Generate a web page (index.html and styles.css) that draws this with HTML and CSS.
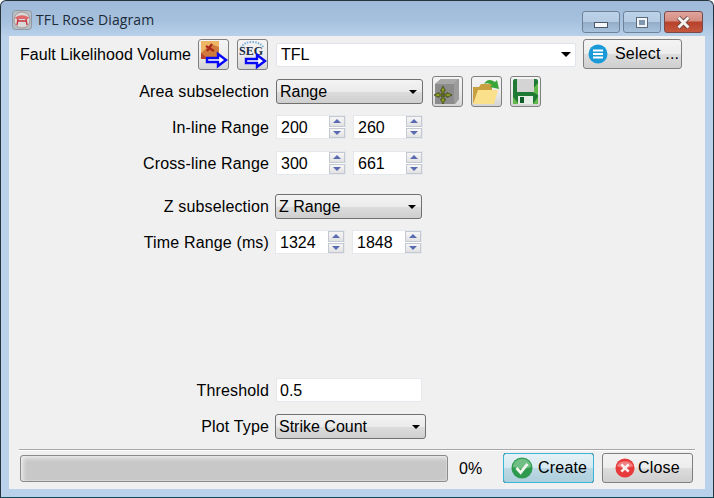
FILE: index.html
```html
<!DOCTYPE html>
<html lang="en">
<head>
  <meta charset="UTF-8" />
  <title>TFL Rose Diagram</title>
  <link rel="stylesheet" href="styles.css">
</head>
<body>
  <div class="window">
    <div class="titlebar">
      <svg class="app-icon" width="20" height="20" viewBox="0 0 20 20">
        <rect x="0.5" y="0.5" width="19" height="19" rx="3" fill="#b5bcc4" stroke="#8d98a3"/>
        <circle cx="10" cy="10" r="8" fill="#d8d8d8" stroke="#a89a9a"/>
        <path d="M3 7.5 Q10 3 17 7.5 L16 9 H4 Z" fill="#e0686c"/>
        <path d="M6 9 L5 15 M14 9 L15 15 M6 11 H14" stroke="#c8323a" stroke-width="1.4" fill="none"/>
      </svg>
      <span class="title">TFL Rose Diagram</span>
      <div class="caption-buttons">
        <div class="caption-btn">
          <span class="glyph-min"></span>
        </div>
        <div class="caption-btn">
          <span class="glyph-max"></span>
        </div>
        <div class="caption-btn close">
          <svg width="15" height="13" viewBox="0 0 15 13">
            <path d="M2.5 1.5 L12.5 11.5 M12.5 1.5 L2.5 11.5" stroke="#5a3a38" stroke-width="4.4"/>
            <path d="M2.5 1.5 L12.5 11.5 M12.5 1.5 L2.5 11.5" stroke="#f4f1ee" stroke-width="3"/>
          </svg>
        </div>
      </div>
    </div>

    <div class="client">
      <div class="row volume-row">
        <span class="volume-label">Fault Likelihood Volume</span>
        <div class="icon-btn">
          <svg width="29" height="29" viewBox="0 0 29 29">
            <rect x="2" y="1" width="18" height="18" fill="#d07a3c"/>
            <path d="M2 1 H20 V7 L12 4 L2 13 Z" fill="#eeb564"/>
            <path d="M2 13 L9 19 H2 Z" fill="#b8422a"/>
            <path d="M7 6 L15 11 M13 4 L8 11" stroke="#a82a1e" stroke-width="2.2"/>
            <path d="M8 18 H19 V14 L27 20 L19 26 V22 H8 Z" fill="#fff" stroke="#0808f4" stroke-width="2.4"/>
          </svg>
        </div>
        <div class="icon-btn">
          <svg width="29" height="29" viewBox="0 0 29 29">
            <path d="M3 8 Q6 2 14 2 Q22 2 26 8" fill="none" stroke="#7fb0d8" stroke-width="2" stroke-dasharray="1.5 1.2"/>
            <text class="seg-text" x="1" y="15">SEG</text>
            <path d="M8 19 H19 V15 L27 21 L19 27 V23 H8 Z" fill="#fff" stroke="#0808f4" stroke-width="2.4"/>
          </svg>
        </div>
        <div class="combo-flat">
          <span>TFL</span>
          <span class="arrow"></span>
        </div>
        <div class="btn select-btn">
          <svg width="20" height="20" viewBox="0 0 20 20">
            <circle cx="10" cy="10" r="9.5" fill="#1a9ad8"/>
            <path d="M5 6.5 H15 M5 10 H15 M5 13.5 H15" stroke="#fff" stroke-width="2"/>
          </svg>
          <span>Select ...</span>
        </div>
      </div>

      <div class="row area-row">
        <span class="label">Area subselection</span>
        <div class="combo area-combo"><span>Range</span><span class="arrow small"></span></div>
        <div class="area-tools">
          <div class="icon-btn">
            <svg width="29" height="29" viewBox="0 0 29 29">
              <path d="M2 7 L8 2 H26 V22 L22 27 H2 Z" fill="#8c8c8c"/>
              <path d="M2 7 L8 2 H26 L21 7 Z" fill="#a8a8a8"/>
              <path d="M21 7 L26 2 V22 L21 27 Z" fill="#9c9c9c"/>
              <path d="M7.5 14 L10 9 L12.5 14 H11 V17 H9 V14 Z M7.5 22 L10 27 L12.5 22 H11 V19 H9 V22 Z M6 15.5 L1 18 L6 20.5 V19 H9 V17 H6 Z M14 15.5 L19 18 L14 20.5 V19 H11 V17 H14 Z" fill="#8c9c24" stroke="#3c4418" stroke-width="0.8"/>
            </svg>
          </div>
          <div class="icon-btn">
            <svg width="29" height="29" viewBox="0 0 29 29">
              <path d="M1 10 H7 L9 7 H20 V26 H1 Z" fill="#c9a040"/>
              <path d="M1 27 L6 13 H26 L22 27 Z" fill="#fbe08c"/>
              <path d="M12 7 Q16 0 23 5 L25 3 L27 12 L18 10 L20 8 Q16 5 12 7 Z" fill="#3aa63a"/>
            </svg>
          </div>
          <div class="icon-btn">
            <svg width="29" height="29" viewBox="0 0 29 29">
              <rect x="2" y="2" width="25" height="25" rx="2" fill="#1f7a36"/>
              <path d="M20 14 L27 6 V18 Z M2 20 L8 27 H2 Z M22 27 L27 20 V27 Z" fill="#62b84a"/>
              <rect x="6" y="2" width="17" height="13" fill="#d4d4d4"/>
              <rect x="7" y="19" width="15" height="8" fill="#e6ece6"/>
              <rect x="9" y="20" width="4" height="6" fill="#0f5c28"/>
            </svg>
          </div>
        </div>
      </div>

      <div class="row range-row inline-row">
        <span class="label">In-line Range</span>
        <div class="range-pair">
          <div class="spin"><span class="spin-value">200</span><span class="spin-arrows"><i class="up"></i><i class="down"></i></span></div>
          <div class="spin"><span class="spin-value">260</span><span class="spin-arrows"><i class="up"></i><i class="down"></i></span></div>
        </div>
      </div>

      <div class="row range-row cross-row">
        <span class="label">Cross-line Range</span>
        <div class="range-pair">
          <div class="spin"><span class="spin-value">300</span><span class="spin-arrows"><i class="up"></i><i class="down"></i></span></div>
          <div class="spin"><span class="spin-value">661</span><span class="spin-arrows"><i class="up"></i><i class="down"></i></span></div>
        </div>
      </div>

      <div class="row z-row">
        <span class="label tight">Z subselection</span>
        <div class="combo area-combo"><span>Z Range</span><span class="arrow small"></span></div>
      </div>

      <div class="row range-row time-row">
        <span class="label tight">Time Range (ms)</span>
        <div class="range-pair">
          <div class="spin"><span class="spin-value">1324</span><span class="spin-arrows"><i class="up"></i><i class="down"></i></span></div>
          <div class="spin"><span class="spin-value">1848</span><span class="spin-arrows"><i class="up"></i><i class="down"></i></span></div>
        </div>
      </div>

      <div class="spacer"></div>

      <div class="row range-row">
        <span class="label">Threshold</span>
        <div class="text-field">0.5</div>
      </div>

      <div class="row plot-row">
        <span class="label tight">Plot Type</span>
        <div class="combo plot-combo"><span>Strike Count</span><span class="arrow small"></span></div>
      </div>

      <div class="separator"></div>

      <div class="bottom-row">
        <div class="progress"></div>
        <span class="percent">0%</span>
        <div class="btn action-btn create">
          <svg width="22" height="22" viewBox="0 0 24 24">
            <circle cx="12" cy="12" r="11.5" fill="#2e9a4e"/>
            <path d="M2 11 A10 9 0 0 1 22 11 Q12 15 2 11 Z" fill="#6fbf84"/>
            <path d="M6 12 L10.5 17 L18 7.5" fill="none" stroke="#f2f6ee" stroke-width="3"/>
          </svg>
          <span>Create</span>
        </div>
        <div class="btn action-btn close-btn">
          <svg width="20" height="20" viewBox="0 0 22 22">
            <circle cx="11" cy="11" r="10.5" fill="#e83a3a"/>
            <path d="M2 9 A9.5 8 0 0 1 20 9 Q11 13 2 9 Z" fill="#f08080"/>
            <path d="M7 7 L15 15 M15 7 L7 15" stroke="#fbeeee" stroke-width="3"/>
          </svg>
          <span>Close</span>
        </div>
      </div>
    </div>
  </div>
</body>
</html>
```

FILE: styles.css
```css
html, body {
  margin: 0;
  padding: 0;
  background: #fff;
}

.window {
  width: 714px;
  height: 498px;
  box-sizing: border-box;
  display: flex;
  flex-direction: column;
  padding: 0 8px 8px 8px;
  border: 1px solid #26343c;
  border-bottom-color: #0f4a58;
  border-radius: 6px 6px 0 0;
  background: linear-gradient(to bottom, #9fbad8 0, #a6c1de 20px, #b9d1ea 36px);
  font-family: "Liberation Sans", Arial, sans-serif;
  font-size: 16px;
  color: #000;
}

.titlebar {
  height: 35px;
  flex: none;
  display: flex;
  align-items: center;
  position: relative;
}

.app-icon {
  margin: 2px 0 0 3px;
}

.title {
  margin: 2px 0 0 4px;
  font-family: "Open Sans", sans-serif;
  font-size: 14px;
  letter-spacing: 0.1px;
  color: #1c2a38;
}

.caption-buttons {
  position: absolute;
  top: 10px;
  right: 2px;
  display: flex;
  gap: 3px;
}

.caption-btn {
  width: 38px;
  height: 22px;
  box-sizing: border-box;
  display: flex;
  align-items: center;
  justify-content: center;
  border: 1px solid #6f8299;
  border-radius: 3px;
  background: linear-gradient(to bottom, #bcd2e8 0, #b4cbe3 50%, #94aec9 52%, #a8c1db 100%);
}

.caption-btn.close {
  width: 39px;
  border-color: #7a4a4a;
  background: linear-gradient(to bottom, #e0a49c 0, #d48c80 45%, #b8402a 50%, #c4583e 100%);
}

.glyph-min {
  width: 12px;
  height: 4px;
  margin-top: 6px;
  background: #f6f8fa;
  border: 1px solid #4a5a6c;
}

.glyph-max {
  width: 6px;
  height: 5px;
  border: 2px solid #f2f5f8;
  outline: 1px solid #5a6a7c;
  background: #7f96ae;
}

.client {
  flex: 1;
  display: flex;
  flex-direction: column;
  padding: 3px 0 6px 11px;
  background: #f0f0f0;
}

.row {
  display: flex;
  align-items: center;
  flex: none;
}

.volume-row {
  height: 31px;
  gap: 8px;
}

.volume-label {
  width: 170px;
  letter-spacing: 0.05px;
  white-space: nowrap;
}

.area-row {
  height: 31px;
  margin-top: 6px;
}

.range-row {
  height: 24px;
  padding-top: 1px;
  box-sizing: border-box;
  align-items: flex-start;
}

.range-row .label {
  line-height: 23px;
}

.inline-row {
  margin-top: 8px;
}

.cross-row {
  margin-top: 12px;
}

.z-row {
  height: 25px;
  margin-top: 19px;
}

.time-row {
  margin-top: 11px;
}

.plot-row {
  height: 25px;
  margin-top: 12px;
}

.spacer {
  flex: 1;
}

.label {
  width: 249px;
  margin-right: 7px;
  text-align: right;
  letter-spacing: 0.15px;
  white-space: nowrap;
}

.label.tight {
  margin-right: 6px;
}

.icon-btn {
  width: 31px;
  height: 31px;
  box-sizing: border-box;
  border: 1px solid #7f7f7f;
  border-radius: 3px;
  background: linear-gradient(to bottom, #f4f4f4, #ececec 50%, #d4d4d4);
  overflow: hidden;
}

.icon-btn svg {
  display: block;
}

.seg-text {
  font-family: "Liberation Serif", serif;
  font-size: 12px;
  font-weight: bold;
  fill: #1a2a40;
}

.combo-flat {
  width: 300px;
  height: 24px;
  box-sizing: border-box;
  display: flex;
  align-items: center;
  justify-content: space-between;
  padding: 0 4px 0 4px;
  border: 1px solid #dfe5ea;
  border-radius: 2px;
  background: #fff;
}

.arrow {
  width: 0;
  height: 0;
  border-left: 5px solid transparent;
  border-right: 5px solid transparent;
  border-top: 5px solid #000;
}

.arrow.small {
  border-left-width: 4px;
  border-right-width: 4px;
  border-top-width: 4px;
}

.combo {
  height: 25px;
  box-sizing: border-box;
  display: flex;
  align-items: center;
  justify-content: space-between;
  padding: 0 5px 0 3px;
  border: 1px solid #707070;
  border-radius: 3px;
  background: linear-gradient(to bottom, #f3f3f3, #ebebeb 50%, #dcdcdc 52%, #cfcfcf);
}

.area-combo {
  width: 147px;
}

.plot-combo {
  width: 151px;
}

.area-tools {
  display: flex;
  gap: 8px;
  margin-left: 9px;
}

.range-pair {
  display: flex;
  gap: 7px;
  margin-top: -1px;
}

.spin {
  width: 70px;
  height: 24px;
  box-sizing: border-box;
  display: flex;
  justify-content: space-between;
  padding-left: 4px;
  line-height: 23px;
  border: 1px solid #e4e8ec;
  background: #fff;
}

.spin-arrows {
  width: 16px;
  height: 22px;
  display: flex;
  flex-direction: column;
  gap: 1px;
}

.spin-arrows i {
  flex: 1;
  display: flex;
  align-items: center;
  justify-content: center;
  border: 1px solid #c4c8d0;
  background: linear-gradient(to bottom, #f6f6f6, #e2e2e2);
}

.spin-arrows i::after {
  content: "";
  width: 0;
  height: 0;
  border-left: 4px solid transparent;
  border-right: 4px solid transparent;
}

.spin-arrows .up::after {
  border-bottom: 4px solid #5a6ab0;
}

.spin-arrows .down::after {
  border-top: 4px solid #5a6ab0;
}

.text-field {
  width: 146px;
  height: 24px;
  box-sizing: border-box;
  margin-top: -1px;
  padding-left: 3px;
  line-height: 23px;
  border: 1px solid #e4e8ec;
  border-radius: 2px;
  background: #fff;
}

.separator {
  width: 676px;
  height: 1px;
  flex: none;
  margin: 10px 0 2px -1px;
  background: #a8a8a8;
  border-bottom: 1px solid #fff;
}

.bottom-row {
  display: flex;
  align-items: flex-start;
  flex: none;
  height: 30px;
}

.progress {
  width: 428px;
  height: 27px;
  margin-top: 2px;
  box-sizing: border-box;
  border: 1px solid #8a8a8a;
  border-radius: 3px;
  background: #c8c8c8;
  box-shadow: inset 3px 3px 4px -1px #eeeeee, inset -1px -1px 1px #d8d8d8;
}

.percent {
  width: 44px;
  margin-left: 11px;
  margin-top: 7px;
}

.btn {
  box-sizing: border-box;
  display: flex;
  align-items: center;
  border: 1px solid #7f7f7f;
  border-radius: 3px;
  letter-spacing: 0.2px;
  background: linear-gradient(to bottom, #f4f4f4, #ececec 50%, #dcdcdc 52%, #cfcfcf);
}

.select-btn {
  width: 99px;
  height: 30px;
  margin-left: -1px;
  align-self: flex-start;
  gap: 7px;
  padding-left: 4px;
  white-space: nowrap;
}

.action-btn {
  width: 91px;
  height: 30px;
  gap: 5px;
  padding-left: 7px;
}

.action-btn.create {
  border: 1px dotted #000;
  outline: 1px solid #39b6d6;
  outline-offset: -1px;
  background: linear-gradient(to bottom, #e6f1f6, #d6e8f0 50%, #bcd8e4 52%, #aecfdc);
}

.close-btn {
  margin-left: 8px;
  gap: 3px;
  padding-left: 12px;
}
```
